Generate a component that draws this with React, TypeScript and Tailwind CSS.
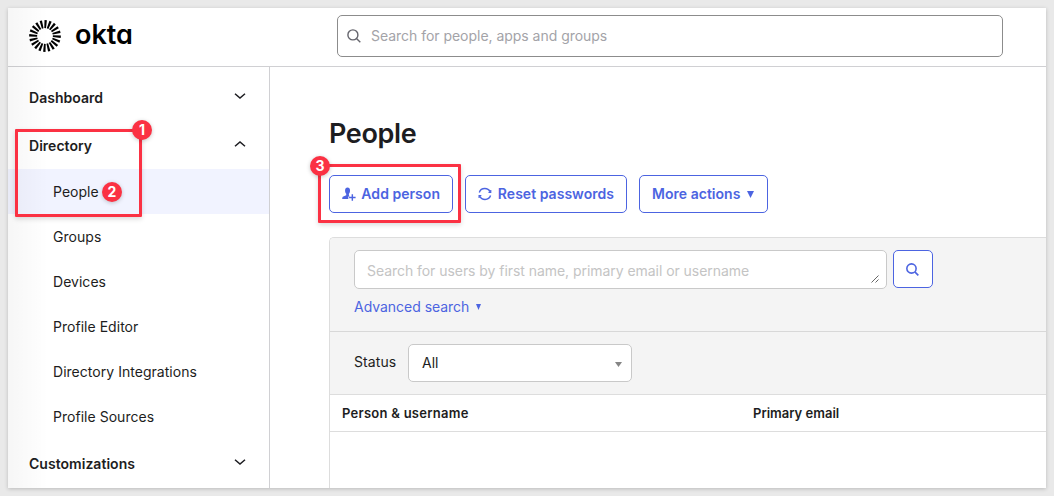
import React from "react";

const rays = Array.from({ length: 20 }, (_, i) => i * 18);

function OktaMark() {
  return (
    <svg viewBox="0 0 32 32" className="h-8 w-8" aria-hidden="true">
      {rays.map((angle) => (
        <path
          key={angle}
          d="M15.5 0.1L17.9 0.3L17 8.2L15.3 8.1Z"
          fill="#000"
          transform={`rotate(${angle} 16 16)`}
        />
      ))}
    </svg>
  );
}

function Chevron({ up = false }: { up?: boolean }) {
  return (
    <svg viewBox="0 0 12 8" className="h-2 w-3" fill="none" stroke="#1d1d21" strokeWidth="1.5" aria-hidden="true">
      <path d={up ? "M1 6.3L6 1.9L11 6.3" : "M1 1.7L6 6.1L11 1.7"} />
    </svg>
  );
}

function SearchIcon({ className }: { className: string }) {
  return (
    <svg viewBox="0 0 14 14" className={className} fill="none" stroke="currentColor" aria-hidden="true">
      <circle cx="5.9" cy="5.9" r="5" />
      <path d="M9.5 9.5L13.3 13.3" />
    </svg>
  );
}

function AddPersonIcon() {
  return (
    <svg viewBox="0 0 15 14" className="h-[14px] w-[15px]" fill="currentColor" aria-hidden="true">
      <path d="M5.8 0.2C4.1 0.2 3.2 1.5 3.2 3.4C3.2 4.9 3.7 6.1 4.4 6.8V8.2L1.4 9.5C0.6 9.9 0.2 10.6 0.2 12.3H6.6V9.6H8L7.2 8.2V6.8C7.9 6.1 8.4 4.9 8.4 3.4C8.4 1.5 7.5 0.2 5.8 0.2Z" />
      <path d="M10.8 7.3V14M7.4 10.6H14.2" fill="none" stroke="currentColor" strokeWidth="1.5" />
    </svg>
  );
}

function RefreshIcon() {
  return (
    <svg viewBox="0 0 14 14" className="h-[14px] w-[14px]" fill="none" stroke="currentColor" strokeWidth="1.4" aria-hidden="true">
      <path d="M1.3 5.4C2.1 3 4.2 1.5 6.9 1.5C9.4 1.5 11.3 2.7 12.4 4.8" />
      <path d="M12.7 8.6C11.9 11 9.8 12.5 7.1 12.5C4.6 12.5 2.7 11.3 1.6 9.2" />
      <path d="M12.9 3V5.3H10.6" strokeWidth="1.2" />
      <path d="M1.1 11V8.7H3.4" strokeWidth="1.2" />
    </svg>
  );
}

function Triangle({ className }: { className: string }) {
  return (
    <svg viewBox="0 0 8 8" className={className} fill="currentColor" preserveAspectRatio="none" aria-hidden="true">
      <path d="M0 0H8L4 8Z" />
    </svg>
  );
}

function Badge({ n, className }: { n: number; className: string }) {
  return (
    <span
      className={`absolute z-20 flex h-5 w-5 items-center justify-center rounded-full bg-[#fb3143] text-[14px] font-bold leading-none text-white shadow-[0_1px_4px_rgba(0,0,0,0.22)] ${className}`}
    >
      {n}
    </span>
  );
}

function Section({ label, open = false, className }: { label: string; open?: boolean; className: string }) {
  return (
    <div className={`flex items-center justify-between pl-[21px] pr-[23px] text-[14px] font-semibold tracking-[0.03px] ${className}`}>
      <span>{label}</span>
      <span className="-translate-y-0.5">
        <Chevron up={open} />
      </span>
    </div>
  );
}

const items = ["People", "Groups", "Devices", "Profile Editor", "Directory Integrations", "Profile Sources"];

function Sidebar() {
  return (
    <nav className="w-[262px] shrink-0 border-r border-[#d0d0d3] pt-[7px]">
      <Section label="Dashboard" className="mb-px h-[47px]" />
      <Section label="Directory" open className="h-[47px]" />
      {items.map((item) => (
        <div
          key={item}
          className={`flex h-[45px] items-center pl-[45px] text-[14px] tracking-[0.03px] ${item === "People" ? "bg-[#f1f3ff]" : ""}`}
        >
          {item}
        </div>
      ))}
      <Section label="Customizations" className="h-[49px]" />
    </nav>
  );
}

const button =
  "flex h-[38px] items-center rounded-[5px] border border-[#4c64e1] bg-white px-3 text-[14px] font-semibold tracking-[0.03px] text-[#4c64e1] whitespace-nowrap";

export default function App() {
  return (
    <div className="h-[496px] w-[1054px] overflow-hidden bg-[#e9e9e9] p-2 font-['Inter','Liberation_Sans',sans-serif] text-[#1d1d21]">
      <div className="relative flex h-[480px] w-[1038px] flex-col bg-white shadow-[0_1px_4px_rgba(0,0,0,0.2)]">
        <header className="flex h-[59px] shrink-0 items-center border-b border-[#d0d0d3] pl-[21px]">
          <div className="flex w-[308px] items-center gap-[14px] pb-[3px]">
            <OktaMark />
            <span className="-translate-y-px text-[27px] font-semibold leading-8 text-black [font-feature-settings:'cv11']">okta</span>
          </div>
          <div className="mb-[3px] flex h-[42px] w-[666px] items-center rounded-[5px] border border-[#8c8c8c] pl-[9px]">
            <SearchIcon className="h-[14px] w-[14px] stroke-[1.4] text-[#65656d]" />
            <span className="pl-[10px] text-[14px] tracking-[-0.03px] text-[#a3a3a8]">Search for people, apps and groups</span>
          </div>
        </header>

        <div className="flex min-h-0 flex-1">
          <Sidebar />
          <main className="min-w-0 flex-1 pl-[59px] pt-[49px]">
            <h1 className="h-[35px] text-[27px] font-semibold leading-[35px] tracking-[-0.35px]">People</h1>
            <div className="mt-6 flex gap-3">
              <button className={`${button} w-[124px]`}>
                <AddPersonIcon />
                <span className="pb-0.5 pl-[5px]">Add person</span>
              </button>
              <button className={`${button} w-[162px]`}>
                <RefreshIcon />
                <span className="pb-0.5 pl-[6px]">Reset passwords</span>
              </button>
              <button className={`${button} w-[129px]`}>
                <span className="pb-0.5">More actions</span>
                <Triangle className="ml-[7px] mt-px h-[7px] w-[7px]" />
              </button>
            </div>

            <section className="mt-6 h-[251px] overflow-hidden rounded-tl-[5px] border-l border-t border-[#dddddd]">
              <div className="h-[94px] border-b border-[#d8d8d8] bg-[#f4f4f4] pl-6 pt-3">
                <div className="flex gap-[6px]">
                  <div className="flex h-[39px] w-[533px] items-center justify-between rounded-[5px] border border-[#c9c9c9] bg-white pl-3 pr-[7px]">
                    <span className="pt-px text-[14px] tracking-[-0.05px] text-[#c4c4c4]">
                      Search for users by first name, primary email or username
                    </span>
                    <svg viewBox="0 0 8 8" className="mt-[18px] h-2 w-2" stroke="#555" fill="none" strokeWidth="0.9" aria-hidden="true">
                      <path d="M0.5 7.5L7.5 0.5M4.5 7.5L7.5 4.5" />
                    </svg>
                  </div>
                  <button className="flex h-[38px] w-10 items-center justify-center rounded-[5px] border border-[#4c64e1] bg-white pr-px text-[#4c64e1]">
                    <SearchIcon className="h-[13px] w-[13px] stroke-[1.7]" />
                  </button>
                </div>
                <div className="mt-2 flex items-center text-[14px] leading-5 tracking-[-0.03px] text-[#4c64e1]">
                  Advanced search
                  <Triangle className="ml-[7px] h-[6px] w-[5px]" />
                </div>
              </div>
              <div className="flex h-[63px] items-center border-b border-[#dddddd] bg-[#f4f4f4] pl-6">
                <span className="w-[54px] pb-1 text-[14px] tracking-[0.1px]">Status</span>
                <div className="flex h-[38px] w-56 items-center justify-between rounded-[5px] border border-[#c9c9c9] bg-white pl-[13px] pr-[9px] text-[14px]">
                  <span className="pb-0.5">All</span>
                  <Triangle className="mt-[3px] h-[5px] w-[7px] text-[#858585]" />
                </div>
              </div>
              <div className="flex h-[37px] items-center border-b border-[#dddddd] pl-3 pt-px text-[13px] font-semibold">
                <span className="w-[411px] tracking-[0.26px]">Person &amp; username</span>
                <span>Primary email</span>
              </div>
            </section>
          </main>
        </div>

        <div className="pointer-events-none absolute inset-y-0 left-0 w-10 bg-gradient-to-r from-black/[0.035] to-transparent" />
        <div className="pointer-events-none absolute left-[7px] top-[121px] z-10 h-[88px] w-[127px] rounded-[1px] border-[3px] border-[#fb3143] shadow-[0_2px_5px_rgba(0,0,0,0.15)]" />
        <div className="pointer-events-none absolute left-[310px] top-[156px] z-10 h-[59px] w-[143px] rounded-[1px] border-[3px] border-[#fb3143] shadow-[0_2px_5px_rgba(0,0,0,0.15)]" />
        <Badge n={1} className="left-[124px] top-[112px]" />
        <Badge n={2} className="left-[94px] top-[174px]" />
        <Badge n={3} className="left-[302px] top-[148px]" />
      </div>
    </div>
  );
}
